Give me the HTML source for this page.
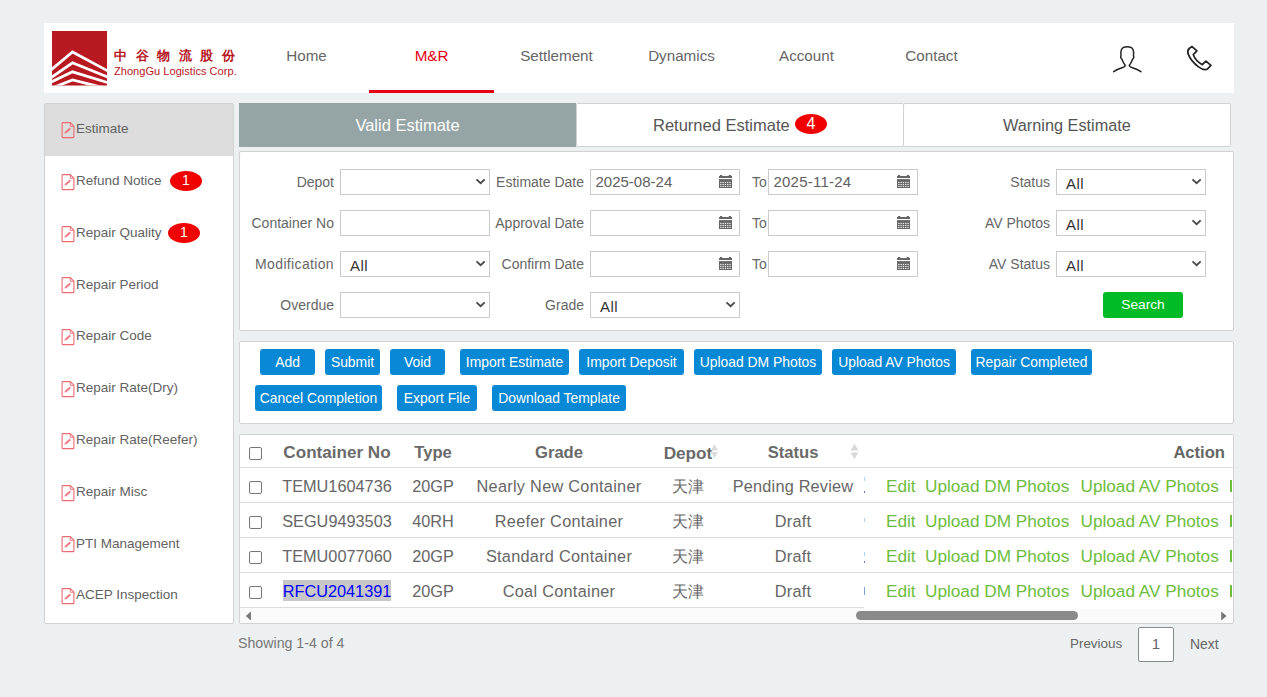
<!DOCTYPE html>
<html><head><meta charset="utf-8">
<style>
*{margin:0;padding:0;box-sizing:border-box}
html,body{width:1267px;height:697px;overflow:hidden;background:#ecf0f1;font-family:"Liberation Sans",sans-serif;position:relative}
.a{position:absolute}
.t{position:absolute;height:0;line-height:0;white-space:nowrap}
.box{position:absolute;background:#fff;border:1px solid #d2d2d2;border-radius:2px}
.nav{position:absolute;top:55.6px;width:125px;height:0;line-height:0;text-align:center;font-size:15.2px;color:#666}
.sb{position:absolute;left:76px;height:0;line-height:0;font-size:13.5px;color:#626262;white-space:nowrap}
.ico{position:absolute;left:61px;width:14px;height:17px}
.badge{position:absolute;width:32px;height:20px;border-radius:50%;background:#f00000;color:#fff;font-size:14px;text-align:center;line-height:20px}
.lbl{position:absolute;height:0;line-height:0;font-size:14px;color:#666;text-align:right;white-space:nowrap}
.inp{position:absolute;height:26px;width:150px;border:1px solid #cbcbcb;background:#fff}
.btn{position:absolute;height:26px;background:#0888d5;color:#fff;border-radius:3px;font-size:13.9px;text-align:center;line-height:26px;white-space:nowrap}
.th{position:absolute;top:453px;height:0;line-height:0;font-weight:bold;font-size:16.6px;color:#6a6a6a;white-space:nowrap;text-align:center}
.td{position:absolute;height:0;line-height:0;font-size:16.3px;color:#666;white-space:nowrap;text-align:center}
.hl{position:absolute;left:240px;width:993px;height:1px;background:#dedede}
.cb{position:absolute;left:249px;width:13px;height:13px;border:1px solid #767676;border-radius:2px;background:#fff}
.gr{position:absolute;height:0;line-height:0;font-size:17.2px;color:#6cbd3c;white-space:nowrap}
</style></head><body>

<!-- HEADER -->
<div class="a" style="left:44px;top:23px;width:1190px;height:70px;background:#fff"></div>
<svg class="a" style="left:52px;top:31px" width="55" height="55" viewBox="0 0 55 55">
  <defs><clipPath id="lc"><rect x="0" y="0" width="55" height="54.5"/></clipPath></defs>
  <rect x="0" y="0" width="55" height="54.5" fill="#b8181f"/>
  <g clip-path="url(#lc)" fill="none" stroke="#fff" stroke-width="2.8">
    <polyline points="-2,39.8 20.5,20.9 57,40.6"/>
    <polyline points="-2,47.4 20.5,31.8 57,46.6"/>
    <polyline points="-2,51.6 20.5,40.8 57,52"/>
    <polyline points="-2,57.8 20.5,49 57,58"/>
  </g>
</svg>
<div class="t" style="left:114px;top:56px;font-size:13px;font-weight:bold;color:#b8181f;letter-spacing:8.6px">中谷物流股份</div>
<div class="t" style="left:114px;top:71px;font-size:11.1px;color:#b8181f">ZhongGu Logistics Corp.</div>

<div class="nav" style="left:244px">Home</div>
<div class="nav" style="left:369px;color:#e60012">M&amp;R</div>
<div class="nav" style="left:494px">Settlement</div>
<div class="nav" style="left:619px">Dynamics</div>
<div class="nav" style="left:744px">Account</div>
<div class="nav" style="left:869px">Contact</div>
<div class="a" style="left:369px;top:90px;width:125px;height:3px;background:#e60012"></div>

<svg class="a" style="left:1110px;top:42px" width="34" height="34" viewBox="0 0 34 34" fill="none" stroke="#222" stroke-width="1.5" stroke-linecap="round">
  <path d="M3.7,29.7 C6,28 8,27 12,25.8 C13.5,25.3 15.2,24.5 15.2,23.3 C13.5,21.5 12.6,19 11.8,17 C10.5,16.5 10.5,14.5 11,14 C10.6,11.5 10.5,9.5 11.5,7.5 C12.5,5.5 14.5,4.8 17.3,4.8 C20,4.8 22,5.5 23,7.5 C24,9.5 23.9,11.5 23.5,14 C24,14.5 24,16.5 22.7,17 C21.9,19 21,21.5 19.3,23.3 C19.3,24.5 21,25.3 22.5,25.8 C26.5,27 28.5,28 30.9,29.7"/>
</svg>
<svg class="a" style="left:1183px;top:43px" width="32" height="30" viewBox="0 0 32 30" fill="none" stroke="#222" stroke-width="1.5" stroke-linejoin="round">
  <path transform="translate(-0.3,-0.4) scale(1.13,1.13)" d="M8.3,3.5 L12.6,7.3 L9.3,10.6 C10.5,14 13.5,17.5 17.3,19.5 L20.6,16.4 L25,20.2 L22,23.3 C20,24.5 17.5,24 14,21.5 C10,18.5 6.5,14.5 4.8,10 C4,7.5 4.8,6 6,5 Z"/>
</svg>

<!-- SIDEBAR -->
<div class="box" style="left:44px;top:103px;width:190px;height:521px"></div>
<div class="a" style="left:45px;top:104px;width:188px;height:52px;background:#dddddd"></div>

<svg class="ico" style="top:121.9px" viewBox="0 0 14 17" fill="none" stroke="#ef6b73" stroke-width="1.1"><path d="M1.1,1.3 Q1.1,0.6 1.8,0.6 L9.3,0.6 L12.9,4.2 L12.9,14.9 Q12.9,15.6 12.2,15.6 L1.8,15.6 Q1.1,15.6 1.1,14.9 Z"/><path d="M9.3,0.6 L9.3,4.3 L13,4.3" stroke-width="0.9"/><path d="M4.4,9.7 L8.6,6.0 L9.7,7.0 L5.5,10.8 L3.7,11.2 Z" fill="#ef6b73" stroke-width="0.4"/></svg>
<div class="sb" style="top:129.1px">Estimate</div>
<svg class="ico" style="top:173.7px" viewBox="0 0 14 17" fill="none" stroke="#ef6b73" stroke-width="1.1"><path d="M1.1,1.3 Q1.1,0.6 1.8,0.6 L9.3,0.6 L12.9,4.2 L12.9,14.9 Q12.9,15.6 12.2,15.6 L1.8,15.6 Q1.1,15.6 1.1,14.9 Z"/><path d="M9.3,0.6 L9.3,4.3 L13,4.3" stroke-width="0.9"/><path d="M4.4,9.7 L8.6,6.0 L9.7,7.0 L5.5,10.8 L3.7,11.2 Z" fill="#ef6b73" stroke-width="0.4"/></svg>
<div class="sb" style="top:180.9px">Refund Notice</div>
<svg class="ico" style="top:225.5px" viewBox="0 0 14 17" fill="none" stroke="#ef6b73" stroke-width="1.1"><path d="M1.1,1.3 Q1.1,0.6 1.8,0.6 L9.3,0.6 L12.9,4.2 L12.9,14.9 Q12.9,15.6 12.2,15.6 L1.8,15.6 Q1.1,15.6 1.1,14.9 Z"/><path d="M9.3,0.6 L9.3,4.3 L13,4.3" stroke-width="0.9"/><path d="M4.4,9.7 L8.6,6.0 L9.7,7.0 L5.5,10.8 L3.7,11.2 Z" fill="#ef6b73" stroke-width="0.4"/></svg>
<div class="sb" style="top:232.7px">Repair Quality</div>
<svg class="ico" style="top:277.3px" viewBox="0 0 14 17" fill="none" stroke="#ef6b73" stroke-width="1.1"><path d="M1.1,1.3 Q1.1,0.6 1.8,0.6 L9.3,0.6 L12.9,4.2 L12.9,14.9 Q12.9,15.6 12.2,15.6 L1.8,15.6 Q1.1,15.6 1.1,14.9 Z"/><path d="M9.3,0.6 L9.3,4.3 L13,4.3" stroke-width="0.9"/><path d="M4.4,9.7 L8.6,6.0 L9.7,7.0 L5.5,10.8 L3.7,11.2 Z" fill="#ef6b73" stroke-width="0.4"/></svg>
<div class="sb" style="top:284.5px">Repair Period</div>
<svg class="ico" style="top:329.1px" viewBox="0 0 14 17" fill="none" stroke="#ef6b73" stroke-width="1.1"><path d="M1.1,1.3 Q1.1,0.6 1.8,0.6 L9.3,0.6 L12.9,4.2 L12.9,14.9 Q12.9,15.6 12.2,15.6 L1.8,15.6 Q1.1,15.6 1.1,14.9 Z"/><path d="M9.3,0.6 L9.3,4.3 L13,4.3" stroke-width="0.9"/><path d="M4.4,9.7 L8.6,6.0 L9.7,7.0 L5.5,10.8 L3.7,11.2 Z" fill="#ef6b73" stroke-width="0.4"/></svg>
<div class="sb" style="top:336.3px">Repair Code</div>
<svg class="ico" style="top:380.9px" viewBox="0 0 14 17" fill="none" stroke="#ef6b73" stroke-width="1.1"><path d="M1.1,1.3 Q1.1,0.6 1.8,0.6 L9.3,0.6 L12.9,4.2 L12.9,14.9 Q12.9,15.6 12.2,15.6 L1.8,15.6 Q1.1,15.6 1.1,14.9 Z"/><path d="M9.3,0.6 L9.3,4.3 L13,4.3" stroke-width="0.9"/><path d="M4.4,9.7 L8.6,6.0 L9.7,7.0 L5.5,10.8 L3.7,11.2 Z" fill="#ef6b73" stroke-width="0.4"/></svg>
<div class="sb" style="top:388.1px">Repair Rate(Dry)</div>
<svg class="ico" style="top:432.7px" viewBox="0 0 14 17" fill="none" stroke="#ef6b73" stroke-width="1.1"><path d="M1.1,1.3 Q1.1,0.6 1.8,0.6 L9.3,0.6 L12.9,4.2 L12.9,14.9 Q12.9,15.6 12.2,15.6 L1.8,15.6 Q1.1,15.6 1.1,14.9 Z"/><path d="M9.3,0.6 L9.3,4.3 L13,4.3" stroke-width="0.9"/><path d="M4.4,9.7 L8.6,6.0 L9.7,7.0 L5.5,10.8 L3.7,11.2 Z" fill="#ef6b73" stroke-width="0.4"/></svg>
<div class="sb" style="top:439.9px">Repair Rate(Reefer)</div>
<svg class="ico" style="top:484.5px" viewBox="0 0 14 17" fill="none" stroke="#ef6b73" stroke-width="1.1"><path d="M1.1,1.3 Q1.1,0.6 1.8,0.6 L9.3,0.6 L12.9,4.2 L12.9,14.9 Q12.9,15.6 12.2,15.6 L1.8,15.6 Q1.1,15.6 1.1,14.9 Z"/><path d="M9.3,0.6 L9.3,4.3 L13,4.3" stroke-width="0.9"/><path d="M4.4,9.7 L8.6,6.0 L9.7,7.0 L5.5,10.8 L3.7,11.2 Z" fill="#ef6b73" stroke-width="0.4"/></svg>
<div class="sb" style="top:491.7px">Repair Misc</div>
<svg class="ico" style="top:536.3px" viewBox="0 0 14 17" fill="none" stroke="#ef6b73" stroke-width="1.1"><path d="M1.1,1.3 Q1.1,0.6 1.8,0.6 L9.3,0.6 L12.9,4.2 L12.9,14.9 Q12.9,15.6 12.2,15.6 L1.8,15.6 Q1.1,15.6 1.1,14.9 Z"/><path d="M9.3,0.6 L9.3,4.3 L13,4.3" stroke-width="0.9"/><path d="M4.4,9.7 L8.6,6.0 L9.7,7.0 L5.5,10.8 L3.7,11.2 Z" fill="#ef6b73" stroke-width="0.4"/></svg>
<div class="sb" style="top:543.5px">PTI Management</div>
<svg class="ico" style="top:588.1px" viewBox="0 0 14 17" fill="none" stroke="#ef6b73" stroke-width="1.1"><path d="M1.1,1.3 Q1.1,0.6 1.8,0.6 L9.3,0.6 L12.9,4.2 L12.9,14.9 Q12.9,15.6 12.2,15.6 L1.8,15.6 Q1.1,15.6 1.1,14.9 Z"/><path d="M9.3,0.6 L9.3,4.3 L13,4.3" stroke-width="0.9"/><path d="M4.4,9.7 L8.6,6.0 L9.7,7.0 L5.5,10.8 L3.7,11.2 Z" fill="#ef6b73" stroke-width="0.4"/></svg>
<div class="sb" style="top:595.3px">ACEP Inspection</div>
<div class="badge" style="left:170px;top:171px;line-height:18.5px">1</div>
<div class="badge" style="left:168px;top:223px;line-height:18.5px">1</div>

<!-- TABS -->
<div class="a" style="left:239px;top:103px;width:337px;height:44px;background:#95a5a6"></div>
<div class="box" style="left:576px;top:103px;width:328px;height:44px"></div>
<div class="box" style="left:903px;top:103px;width:328px;height:44px"></div>
<div class="t" style="left:239px;width:337px;top:125px;text-align:center;font-size:16.5px;color:#fff">Valid Estimate</div>
<div class="t" style="left:653px;top:125px;font-size:16.5px;color:#555">Returned Estimate</div>
<div class="badge" style="left:795px;top:114px;width:32px;height:20px;line-height:19px;font-size:16px">4</div>
<div class="t" style="left:903px;width:328px;top:125px;text-align:center;font-size:16.3px;color:#555">Warning Estimate</div>

<!-- FILTER BOX -->
<div class="box" style="left:239px;top:151px;width:995px;height:180px"></div>

<div class="lbl" style="right:933px;top:182px">Depot</div>
<div class="inp" style="left:340px;top:169px"></div>
<svg class="a" style="left:474.8px;top:178.4px" width="11" height="7" viewBox="0 0 11 7" fill="none" stroke="#484848" stroke-width="1.8"><path d="M1.5,1.3 L5.6,5.2 L9.7,1.3"/></svg>
<div class="lbl" style="right:683px;top:182px">Estimate Date</div>
<div class="inp" style="left:590px;top:169px"></div>
<svg class="a" style="left:719px;top:175px" width="13" height="14" viewBox="0 0 13 14"><rect x="1" y="0" width="2.2" height="1.6" fill="#666"/><rect x="9.8" y="0" width="2.2" height="1.6" fill="#666"/><rect x="0" y="1" width="13" height="2" fill="#666"/><rect x="0" y="4.1" width="13" height="8.9" fill="#666"/><g fill="#fff"><rect x="1.2" y="6.9" width="1.3" height="1"/><rect x="3.5" y="6.9" width="1.3" height="1"/><rect x="5.8" y="6.9" width="1.3" height="1"/><rect x="8.1" y="6.9" width="1.3" height="1"/><rect x="10.4" y="6.9" width="1.3" height="1"/><rect x="1.2" y="8.9" width="1.3" height="1"/><rect x="3.5" y="8.9" width="1.3" height="1"/><rect x="5.8" y="8.9" width="1.3" height="1"/><rect x="8.1" y="8.9" width="1.3" height="1"/><rect x="10.4" y="8.9" width="1.3" height="1"/><rect x="1.2" y="10.9" width="1.3" height="1"/><rect x="3.5" y="10.9" width="1.3" height="1"/><rect x="5.8" y="10.9" width="1.3" height="1"/><rect x="8.1" y="10.9" width="1.3" height="1"/><rect x="10.4" y="10.9" width="1.3" height="1"/></g></svg>
<div class="lbl" style="left:752px;top:182px">To</div>
<div class="inp" style="left:768px;top:169px"></div>
<svg class="a" style="left:897px;top:175px" width="13" height="14" viewBox="0 0 13 14"><rect x="1" y="0" width="2.2" height="1.6" fill="#666"/><rect x="9.8" y="0" width="2.2" height="1.6" fill="#666"/><rect x="0" y="1" width="13" height="2" fill="#666"/><rect x="0" y="4.1" width="13" height="8.9" fill="#666"/><g fill="#fff"><rect x="1.2" y="6.9" width="1.3" height="1"/><rect x="3.5" y="6.9" width="1.3" height="1"/><rect x="5.8" y="6.9" width="1.3" height="1"/><rect x="8.1" y="6.9" width="1.3" height="1"/><rect x="10.4" y="6.9" width="1.3" height="1"/><rect x="1.2" y="8.9" width="1.3" height="1"/><rect x="3.5" y="8.9" width="1.3" height="1"/><rect x="5.8" y="8.9" width="1.3" height="1"/><rect x="8.1" y="8.9" width="1.3" height="1"/><rect x="10.4" y="8.9" width="1.3" height="1"/><rect x="1.2" y="10.9" width="1.3" height="1"/><rect x="3.5" y="10.9" width="1.3" height="1"/><rect x="5.8" y="10.9" width="1.3" height="1"/><rect x="8.1" y="10.9" width="1.3" height="1"/><rect x="10.4" y="10.9" width="1.3" height="1"/></g></svg>
<div class="lbl" style="right:217px;top:182px">Status</div>
<div class="inp" style="left:1056px;top:169px"></div>
<svg class="a" style="left:1190.8px;top:178.4px" width="11" height="7" viewBox="0 0 11 7" fill="none" stroke="#484848" stroke-width="1.8"><path d="M1.5,1.3 L5.6,5.2 L9.7,1.3"/></svg>
<div class="t" style="left:1066px;top:184.4px;font-size:15px;letter-spacing:0.4px;color:#333">All</div>
<div class="lbl" style="right:933px;top:223px">Container No</div>
<div class="inp" style="left:340px;top:210px"></div>
<div class="lbl" style="right:683px;top:223px">Approval Date</div>
<div class="inp" style="left:590px;top:210px"></div>
<svg class="a" style="left:719px;top:216px" width="13" height="14" viewBox="0 0 13 14"><rect x="1" y="0" width="2.2" height="1.6" fill="#666"/><rect x="9.8" y="0" width="2.2" height="1.6" fill="#666"/><rect x="0" y="1" width="13" height="2" fill="#666"/><rect x="0" y="4.1" width="13" height="8.9" fill="#666"/><g fill="#fff"><rect x="1.2" y="6.9" width="1.3" height="1"/><rect x="3.5" y="6.9" width="1.3" height="1"/><rect x="5.8" y="6.9" width="1.3" height="1"/><rect x="8.1" y="6.9" width="1.3" height="1"/><rect x="10.4" y="6.9" width="1.3" height="1"/><rect x="1.2" y="8.9" width="1.3" height="1"/><rect x="3.5" y="8.9" width="1.3" height="1"/><rect x="5.8" y="8.9" width="1.3" height="1"/><rect x="8.1" y="8.9" width="1.3" height="1"/><rect x="10.4" y="8.9" width="1.3" height="1"/><rect x="1.2" y="10.9" width="1.3" height="1"/><rect x="3.5" y="10.9" width="1.3" height="1"/><rect x="5.8" y="10.9" width="1.3" height="1"/><rect x="8.1" y="10.9" width="1.3" height="1"/><rect x="10.4" y="10.9" width="1.3" height="1"/></g></svg>
<div class="lbl" style="left:752px;top:223px">To</div>
<div class="inp" style="left:768px;top:210px"></div>
<svg class="a" style="left:897px;top:216px" width="13" height="14" viewBox="0 0 13 14"><rect x="1" y="0" width="2.2" height="1.6" fill="#666"/><rect x="9.8" y="0" width="2.2" height="1.6" fill="#666"/><rect x="0" y="1" width="13" height="2" fill="#666"/><rect x="0" y="4.1" width="13" height="8.9" fill="#666"/><g fill="#fff"><rect x="1.2" y="6.9" width="1.3" height="1"/><rect x="3.5" y="6.9" width="1.3" height="1"/><rect x="5.8" y="6.9" width="1.3" height="1"/><rect x="8.1" y="6.9" width="1.3" height="1"/><rect x="10.4" y="6.9" width="1.3" height="1"/><rect x="1.2" y="8.9" width="1.3" height="1"/><rect x="3.5" y="8.9" width="1.3" height="1"/><rect x="5.8" y="8.9" width="1.3" height="1"/><rect x="8.1" y="8.9" width="1.3" height="1"/><rect x="10.4" y="8.9" width="1.3" height="1"/><rect x="1.2" y="10.9" width="1.3" height="1"/><rect x="3.5" y="10.9" width="1.3" height="1"/><rect x="5.8" y="10.9" width="1.3" height="1"/><rect x="8.1" y="10.9" width="1.3" height="1"/><rect x="10.4" y="10.9" width="1.3" height="1"/></g></svg>
<div class="lbl" style="right:217px;top:223px">AV Photos</div>
<div class="inp" style="left:1056px;top:210px"></div>
<svg class="a" style="left:1190.8px;top:219.4px" width="11" height="7" viewBox="0 0 11 7" fill="none" stroke="#484848" stroke-width="1.8"><path d="M1.5,1.3 L5.6,5.2 L9.7,1.3"/></svg>
<div class="t" style="left:1066px;top:225.4px;font-size:15px;letter-spacing:0.4px;color:#333">All</div>
<div class="lbl" style="right:933px;top:264px;letter-spacing:0.35px">Modification</div>
<div class="inp" style="left:340px;top:251px"></div>
<svg class="a" style="left:474.8px;top:260.4px" width="11" height="7" viewBox="0 0 11 7" fill="none" stroke="#484848" stroke-width="1.8"><path d="M1.5,1.3 L5.6,5.2 L9.7,1.3"/></svg>
<div class="lbl" style="right:683px;top:264px">Confirm Date</div>
<div class="inp" style="left:590px;top:251px"></div>
<svg class="a" style="left:719px;top:257px" width="13" height="14" viewBox="0 0 13 14"><rect x="1" y="0" width="2.2" height="1.6" fill="#666"/><rect x="9.8" y="0" width="2.2" height="1.6" fill="#666"/><rect x="0" y="1" width="13" height="2" fill="#666"/><rect x="0" y="4.1" width="13" height="8.9" fill="#666"/><g fill="#fff"><rect x="1.2" y="6.9" width="1.3" height="1"/><rect x="3.5" y="6.9" width="1.3" height="1"/><rect x="5.8" y="6.9" width="1.3" height="1"/><rect x="8.1" y="6.9" width="1.3" height="1"/><rect x="10.4" y="6.9" width="1.3" height="1"/><rect x="1.2" y="8.9" width="1.3" height="1"/><rect x="3.5" y="8.9" width="1.3" height="1"/><rect x="5.8" y="8.9" width="1.3" height="1"/><rect x="8.1" y="8.9" width="1.3" height="1"/><rect x="10.4" y="8.9" width="1.3" height="1"/><rect x="1.2" y="10.9" width="1.3" height="1"/><rect x="3.5" y="10.9" width="1.3" height="1"/><rect x="5.8" y="10.9" width="1.3" height="1"/><rect x="8.1" y="10.9" width="1.3" height="1"/><rect x="10.4" y="10.9" width="1.3" height="1"/></g></svg>
<div class="lbl" style="left:752px;top:264px">To</div>
<div class="inp" style="left:768px;top:251px"></div>
<svg class="a" style="left:897px;top:257px" width="13" height="14" viewBox="0 0 13 14"><rect x="1" y="0" width="2.2" height="1.6" fill="#666"/><rect x="9.8" y="0" width="2.2" height="1.6" fill="#666"/><rect x="0" y="1" width="13" height="2" fill="#666"/><rect x="0" y="4.1" width="13" height="8.9" fill="#666"/><g fill="#fff"><rect x="1.2" y="6.9" width="1.3" height="1"/><rect x="3.5" y="6.9" width="1.3" height="1"/><rect x="5.8" y="6.9" width="1.3" height="1"/><rect x="8.1" y="6.9" width="1.3" height="1"/><rect x="10.4" y="6.9" width="1.3" height="1"/><rect x="1.2" y="8.9" width="1.3" height="1"/><rect x="3.5" y="8.9" width="1.3" height="1"/><rect x="5.8" y="8.9" width="1.3" height="1"/><rect x="8.1" y="8.9" width="1.3" height="1"/><rect x="10.4" y="8.9" width="1.3" height="1"/><rect x="1.2" y="10.9" width="1.3" height="1"/><rect x="3.5" y="10.9" width="1.3" height="1"/><rect x="5.8" y="10.9" width="1.3" height="1"/><rect x="8.1" y="10.9" width="1.3" height="1"/><rect x="10.4" y="10.9" width="1.3" height="1"/></g></svg>
<div class="lbl" style="right:217px;top:264px">AV Status</div>
<div class="inp" style="left:1056px;top:251px"></div>
<svg class="a" style="left:1190.8px;top:260.4px" width="11" height="7" viewBox="0 0 11 7" fill="none" stroke="#484848" stroke-width="1.8"><path d="M1.5,1.3 L5.6,5.2 L9.7,1.3"/></svg>
<div class="t" style="left:1066px;top:266.4px;font-size:15px;letter-spacing:0.4px;color:#333">All</div>
<div class="lbl" style="right:933px;top:305px">Overdue</div>
<div class="inp" style="left:340px;top:292px"></div>
<svg class="a" style="left:474.8px;top:301.4px" width="11" height="7" viewBox="0 0 11 7" fill="none" stroke="#484848" stroke-width="1.8"><path d="M1.5,1.3 L5.6,5.2 L9.7,1.3"/></svg>
<div class="lbl" style="right:683px;top:305px">Grade</div>
<div class="inp" style="left:590px;top:292px"></div>
<svg class="a" style="left:724.8px;top:301.4px" width="11" height="7" viewBox="0 0 11 7" fill="none" stroke="#484848" stroke-width="1.8"><path d="M1.5,1.3 L5.6,5.2 L9.7,1.3"/></svg>
<div class="t" style="left:600px;top:307.4px;font-size:15px;letter-spacing:0.4px;color:#333">All</div>
<div class="t" style="left:350px;top:266.4px;font-size:15px;letter-spacing:0.4px;color:#333">All</div>
<div class="t" style="left:595.5px;top:182.4px;font-size:15px;color:#606060">2025-08-24</div>
<div class="t" style="left:773.5px;top:182.4px;font-size:15px;letter-spacing:0.22px;color:#606060">2025-11-24</div>
<div class="a" style="left:1103px;top:292px;width:80px;height:26px;background:#00bb25;border-radius:3px"></div>
<div class="t" style="left:1103px;width:80px;top:305px;text-align:center;font-size:13.7px;color:#fff">Search</div>

<!-- BUTTON BOX -->
<div class="box" style="left:239px;top:341px;width:995px;height:83px"></div>

<div class="btn" style="left:260px;top:349px;width:55px">Add</div>
<div class="btn" style="left:325px;top:349px;width:55px">Submit</div>
<div class="btn" style="left:390px;top:349px;width:55px">Void</div>
<div class="btn" style="left:460px;top:349px;width:109px">Import Estimate</div>
<div class="btn" style="left:579px;top:349px;width:105px">Import Deposit</div>
<div class="btn" style="left:694px;top:349px;width:128px">Upload DM Photos</div>
<div class="btn" style="left:832px;top:349px;width:124px">Upload AV Photos</div>
<div class="btn" style="left:971px;top:349px;width:121px">Repair Completed</div>
<div class="btn" style="left:255px;top:385px;width:127px">Cancel Completion</div>
<div class="btn" style="left:397px;top:385px;width:80px">Export File</div>
<div class="btn" style="left:492px;top:385px;width:134px">Download Template</div>

<!-- TABLE BOX -->
<div class="box" style="left:239px;top:434px;width:995px;height:190px"></div>

<div class="hl" style="top:467px"></div>
<div class="hl" style="top:502px"></div>
<div class="hl" style="top:537px"></div>
<div class="hl" style="top:572px"></div>
<div class="cb" style="top:447px"></div>
<div class="cb" style="top:481px"></div>
<div class="cb" style="top:516px"></div>
<div class="cb" style="top:551px"></div>
<div class="cb" style="top:586px"></div>
<div class="th" style="left:237px;width:200px;font-size:17.1px">Container No</div>
<div class="th" style="left:403px;width:60px">Type</div>
<div class="th" style="left:509px;width:100px">Grade</div>
<div class="th" style="left:638px;width:100px;font-size:17.2px">Depot</div>
<div class="th" style="left:753px;width:80px">Status</div>
<svg class="a" style="left:711px;top:444px" width="7" height="15" viewBox="0 0 7 15"><path d="M3.5,0 L7,6.5 L0,6.5Z M0,8 L7,8 L3.5,14.5Z" fill="#dcdcdc"/></svg>
<svg class="a" style="left:850px;top:444px" width="9" height="15" viewBox="0 0 9 15"><path d="M4.5,0 L8.5,6.5 L0.5,6.5Z M0.5,8.5 L8.5,8.5 L4.5,15Z" fill="#d8d8d8"/></svg>
<div class="td" style="left:237px;width:200px;top:486.3px">TEMU1604736</div>
<div class="td" style="left:383px;width:100px;top:486.3px">20GP</div>
<div class="td" style="left:459px;width:200px;top:486.3px;letter-spacing:0.28px">Nearly New Container</div>
<div class="td" style="left:638px;width:100px;top:486.3px">天津</div>
<div class="td" style="left:693px;width:200px;top:486.3px;letter-spacing:0.2px">Pending Review</div>
<div class="td" style="left:237px;width:200px;top:521.3px">SEGU9493503</div>
<div class="td" style="left:383px;width:100px;top:521.3px">40RH</div>
<div class="td" style="left:459px;width:200px;top:521.3px;letter-spacing:0.28px">Reefer Container</div>
<div class="td" style="left:638px;width:100px;top:521.3px">天津</div>
<div class="td" style="left:693px;width:200px;top:521.3px;letter-spacing:0.2px">Draft</div>
<div class="td" style="left:237px;width:200px;top:556.3px">TEMU0077060</div>
<div class="td" style="left:383px;width:100px;top:556.3px">20GP</div>
<div class="td" style="left:459px;width:200px;top:556.3px;letter-spacing:0.28px">Standard Container</div>
<div class="td" style="left:638px;width:100px;top:556.3px">天津</div>
<div class="td" style="left:693px;width:200px;top:556.3px;letter-spacing:0.2px">Draft</div>
<div class="a" style="left:283px;top:580px;width:108px;height:21px;background:#c8c8c8"></div>
<div class="td" style="left:237px;width:200px;top:591.3px;color:#0000ff">RFCU2041391</div>
<div class="td" style="left:383px;width:100px;top:591.3px">20GP</div>
<div class="td" style="left:459px;width:200px;top:591.3px;letter-spacing:0.28px">Coal Container</div>
<div class="td" style="left:638px;width:100px;top:591.3px">天津</div>
<div class="td" style="left:693px;width:200px;top:591.3px;letter-spacing:0.2px">Draft</div>
<div class="a" style="left:865px;top:435px;width:368px;height:172px;background:#fff"></div>
<div class="a" style="left:865px;width:368px;top:467px;height:1px;background:#dedede"></div>
<div class="a" style="left:865px;width:368px;top:502px;height:1px;background:#dedede"></div>
<div class="a" style="left:865px;width:368px;top:537px;height:1px;background:#dedede"></div>
<div class="a" style="left:865px;width:368px;top:572px;height:1px;background:#dedede"></div>
<div class="t" style="right:42px;top:453px;font-weight:bold;font-size:16.6px;color:#666">Action</div>
<div class="gr" style="left:886px;top:486.3px">Edit</div>
<div class="gr" style="left:925px;top:486.3px">Upload DM Photos</div>
<div class="gr" style="left:1080.5px;top:486.3px">Upload AV Photos</div>
<div class="a" style="left:1229.5px;top:480.3px;width:2px;height:12px;background:#6cbd3c"></div>
<div class="gr" style="left:886px;top:521.3px">Edit</div>
<div class="gr" style="left:925px;top:521.3px">Upload DM Photos</div>
<div class="gr" style="left:1080.5px;top:521.3px">Upload AV Photos</div>
<div class="a" style="left:1229.5px;top:515.3px;width:2px;height:12px;background:#6cbd3c"></div>
<div class="gr" style="left:886px;top:556.3px">Edit</div>
<div class="gr" style="left:925px;top:556.3px">Upload DM Photos</div>
<div class="gr" style="left:1080.5px;top:556.3px">Upload AV Photos</div>
<div class="a" style="left:1229.5px;top:550.3px;width:2px;height:12px;background:#6cbd3c"></div>
<div class="gr" style="left:886px;top:591.3px">Edit</div>
<div class="gr" style="left:925px;top:591.3px">Upload DM Photos</div>
<div class="gr" style="left:1080.5px;top:591.3px">Upload AV Photos</div>
<div class="a" style="left:1229.5px;top:585.3px;width:2px;height:12px;background:#6cbd3c"></div>
<div class="a" style="left:240px;top:607px;width:993px;height:16px;background:#fafafa"></div><div class="a" style="left:240px;top:607px;width:624px;height:1px;background:#dedede"></div><div class="a" style="left:865px;top:607px;width:368px;height:2px;background:#fff"></div>
<div class="a" style="left:856px;top:611px;width:222px;height:9px;border-radius:4.5px;background:#8a8a8a"></div>
<svg class="a" style="left:244px;top:610.5px" width="8" height="10" viewBox="0 0 8 10"><path d="M1.8,5 L7,0.5 L7,9.6Z" fill="#777"/></svg>
<svg class="a" style="left:1220px;top:610.5px" width="8" height="10" viewBox="0 0 8 10"><path d="M6.6,5 L1.2,0.5 L1.2,9.6Z" fill="#777"/></svg>
<div class="t" style="left:238px;top:643px;font-size:14.2px;color:#777">Showing 1-4 of 4</div>
<div class="t" style="left:1070px;top:644px;font-size:13.4px;color:#666">Previous</div>
<div class="a" style="left:1138px;top:627px;width:36px;height:34.5px;background:#fff;border:1px solid #8a8a8a;border-radius:2px"></div>
<div class="t" style="left:1138px;width:36px;top:644px;text-align:center;font-size:15px;color:#666">1</div>
<div class="t" style="left:1190px;top:644px;font-size:13.9px;color:#666">Next</div>
<div class="a" style="left:864px;top:477px;width:1px;height:4px;background:#a8d4f5"></div><div class="a" style="left:864px;top:491px;width:1px;height:2px;background:#5a7fc0"></div><div class="a" style="left:864px;top:518px;width:1px;height:4px;background:#a8d4f5"></div><div class="a" style="left:864px;top:552px;width:1px;height:4px;background:#a8d4f5"></div><div class="a" style="left:864px;top:561px;width:1px;height:2px;background:#5a7fc0"></div><div class="a" style="left:864px;top:587px;width:1px;height:8px;background:#7aa6dc"></div>
</body></html>
